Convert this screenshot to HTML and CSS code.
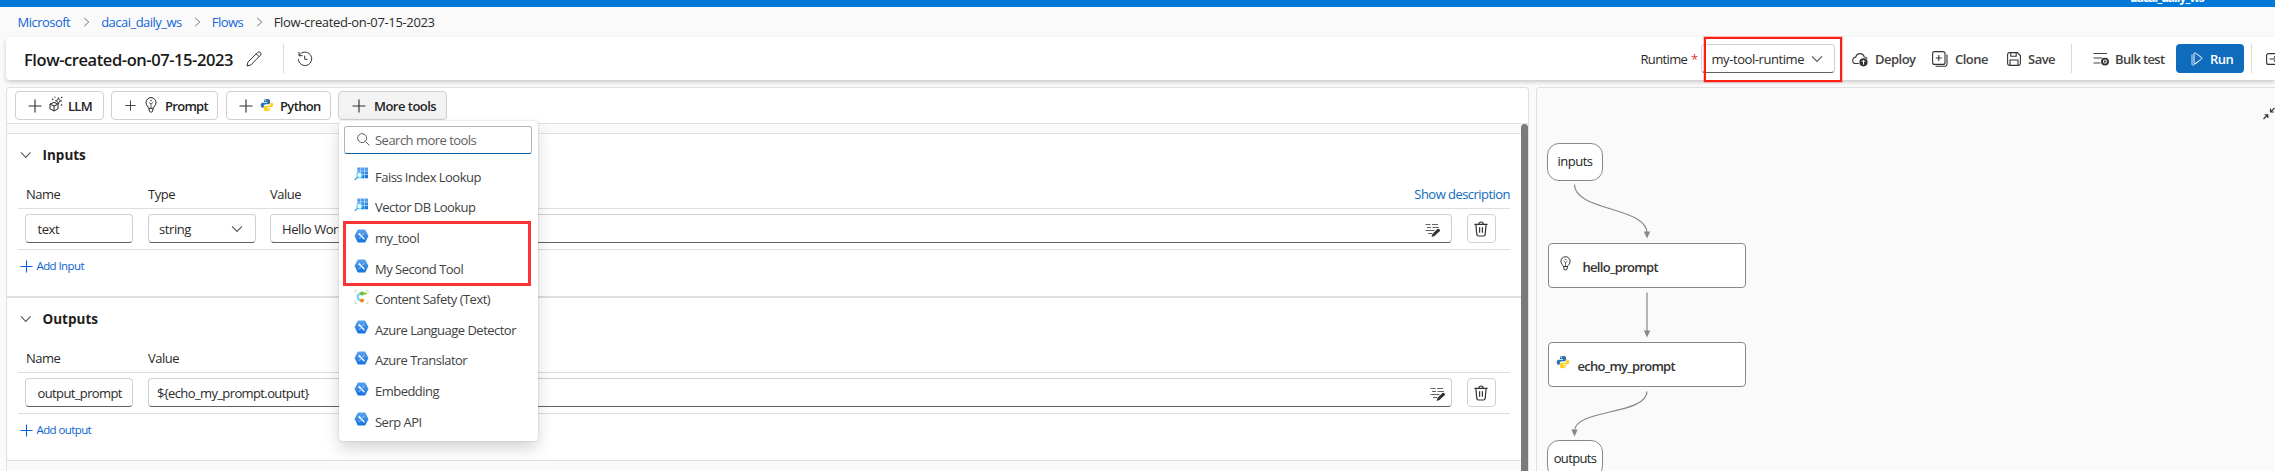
FILE: index.html
```
<!DOCTYPE html>
<html lang="en">
<head>
<meta charset="utf-8">
<title>Flow-created-on-07-15-2023</title>
<link rel="stylesheet" href="styles.css">
</head>
<body>
<svg class="defs" aria-hidden="true">
  <defs>
    <linearGradient id="hexFill" x1="0" y1="0" x2="0" y2="1"><stop offset="0" stop-color="#5aa2f0"/><stop offset="1" stop-color="#1573dd"/></linearGradient>
    <linearGradient id="gridFill" x1="0" y1="0" x2="0" y2="1"><stop offset="0" stop-color="#5ea0ef"/><stop offset="1" stop-color="#0f74d6"/></linearGradient>
  </defs>
  <symbol id="chev" viewBox="0 0 12 8"><path d="M1 1.300 6 6.500 11 1.300" fill="none" stroke="currentColor" stroke-width="1.100"/></symbol>
  <symbol id="crumb" viewBox="0 0 7 11"><path d="M1 1 6 5.500 1 10" fill="none" stroke="currentColor"/></symbol>
  <symbol id="plus" viewBox="0 0 14 14"><path d="M7 .5v13M.5 7h13" fill="none" stroke="currentColor" stroke-width="1.150"/></symbol>
  <symbol id="bulb" viewBox="0 0 12 16"><g fill="none" stroke="currentColor"><path d="M3.700 11.300C3.500 9.700 1 8.600 1 5.600a5 5 0 0 1 10 0c0 3-2.500 4.100-2.700 5.700ZM3.900 11.500l.5 2.700c.1.500.5.800 1 .8h1.200c.5 0 .9-.3 1-.8l.5-2.700"/><path d="M6 11V6.800M3.800 5.200 6 7l2.200-1.800M5 3.600h2" stroke-width=".7"/></g></symbol>
  <symbol id="python" viewBox="0 0 16 16"><path d="M7.900 1C5.500 1 4.600 1.800 4.600 3v1.700h3.600v.6H3C1.700 5.300.8 6.400.8 8.200s.9 2.800 2 2.800h1.500V9.300c0-1.200 1-2.200 2.200-2.200h3.300c1 0 1.700-.8 1.700-1.800V3c0-1.300-1.200-2-3.600-2Z" fill="#2f6fae"/><path d="M8.100 15c2.400 0 3.300-.8 3.300-2v-1.700H7.800v-.6H13c1.300 0 2.200-1.100 2.200-2.900S14.300 5 13.200 5h-1.100v1.700c0 1.200-1 2.200-2.200 2.200H6.200c-1 0-1.700.8-1.700 1.800V13c0 1.300 1.200 2 3.600 2Z" fill="#ffd21f"/><circle cx="6.300" cy="2.900" r=".7" fill="#fff"/><circle cx="9.700" cy="13.100" r=".7" fill="#fff"/></symbol>
  <symbol id="llm" viewBox="0 0 14 16"><g fill="none" stroke="currentColor"><path d="M5 6.400 9 8v4.800L5 15 1 12.800V8ZM1.200 8.200 5 9.900l3.800-1.700M5 9.900V15"/><path d="M9.500 1.600 10.300 4l2.300.8-2.300.8-.8 2.300-.8-2.300-2.300-.8L8.700 4Z" stroke-width=".8"/></g><g fill="currentColor"><circle cx="3.700" cy="3.200" r=".8"/><circle cx="12.700" cy="1.500" r=".8"/><circle cx="12.500" cy="9" r=".8"/><circle cx="6" cy="1.200" r=".6"/></g></symbol>
  <symbol id="hex" viewBox="0 0 14 14"><path d="M3.900.6h6.200q.5 0 .8.5l2.800 5.300q.3.600 0 1.200l-2.800 5.300q-.3.500-.8.500H3.900q-.5 0-.8-.5L.3 7.600Q0 7 .3 6.400l2.800-5.300Q3.400.6 3.900.6Z" fill="url(#hexFill)"/><path d="m5.200 5.400 4.300 4.400" stroke="#fff" stroke-width="1.300" stroke-linecap="round"/><path d="M3.700 4.500c0 1.500 1.200 2.300 2.300 1.800.5-1-.2-2.400-1.700-2.500l.8 1.100Z" fill="#fff"/><path d="M9.700 4.100 7.700 6.300M6.300 7.900 4.600 9.700" stroke="#cfe4fb" stroke-width=".9"/></symbol>
  <symbol id="index" viewBox="0 0 15 15"><path d="M3 .5h3.500V4H3Zm4 0h3.500V4H7Zm4 0h3.500V4H11Zm-8 4h3.500V8H3Zm4 0h3.500V8H7Zm4 0h3.500V8H11Zm-4 4h3.500V12H7Zm4 0h3.500V12H11Z" fill="url(#gridFill)"/><circle cx="5.300" cy="8.800" r="2.800" fill="#e6faff" stroke="#5fd2f5" stroke-width="1.100"/><path d="M3.200 10.900.7 13.500" stroke="#4aa9e6" stroke-width="1.500" stroke-linecap="round"/></symbol>
  <symbol id="safety" viewBox="0 0 16 16"><g fill="none"><path d="M.6 3.500V.6h2.500M12.900.6h2.500v2.900M15.400 12.500v2.900h-2.500M3.100 15.400H.6v-2.900" stroke="#b5dfa0" stroke-width=".9"/><path d="M7.600 3.800C2.400 4.600 2.400 11 7.600 12" stroke="#6fd6f5" stroke-width="2.600"/><path d="M7 4h7" stroke="#72c12c" stroke-width="2"/></g><circle cx="8.600" cy="4" r="2.300" fill="#72c12c"/><circle cx="8.600" cy="11.900" r="2.300" fill="#f5811f"/></symbol>
  <symbol id="trash" viewBox="0 0 14 16"><path d="M.4 3.400h13.200M4.800 3.200a2.200 2.200 0 0 1 4.400 0M1.900 3.600l.9 9.800c.1.900.8 1.600 1.700 1.600h5c.9 0 1.600-.7 1.700-1.600l.9-9.800M5.600 6.300v5.400M8.400 6.300v5.400" fill="none" stroke="currentColor" stroke-width="1.200"/></symbol>
  <symbol id="edit" viewBox="0 0 16 14"><path d="M.5 1.500h5M7 1.500h6M2 4.500h4M7.500 4.500H14M.5 7.500h9M3 10.500h4" stroke="#666" fill="none"/><path d="m7.400 11 5-5q1-.8 2.100.2t.1 2l-5.100 4.900-3 .9Z" fill="#333"/></symbol>
</svg>

<div class="topbar"><span class="topbar-ws">dacai_daily_ws</span></div>

<nav class="crumbs">
  <a>Microsoft</a><svg class="sep sep-1"><use href="#crumb"/></svg>
  <a>dacai_daily_ws</a><svg class="sep sep-2"><use href="#crumb"/></svg>
  <a>Flows</a><svg class="sep sep-3"><use href="#crumb"/></svg>
  <span class="here">Flow-created-on-07-15-2023</span>
</nav>

<header class="head">
  <h1>Flow-created-on-07-15-2023</h1>
  <svg class="pencil" viewBox="0 0 16 16"><path d="m1 15 .9-3.900L11.600 1.500a1.900 1.900 0 0 1 2.800 0 1.900 1.900 0 0 1 0 2.800L4.800 14ZM10.300 2.900l2.800 2.800" fill="none" stroke="#333"/></svg>
  <i class="rule rule-a"></i>
  <svg class="history" viewBox="0 0 16 16"><g fill="none" stroke="#333"><path d="M2.300 4.300A6.700 6.700 0 1 1 1.300 8M2 1v3.700h3.700"/><path d="M7.700 4.700v3.600h2.800"/></g></svg>
  <div class="actions">
    <span class="rt-label">Runtime</span><span class="star">*</span>
    <div class="rt-select"><span>my-tool-runtime</span><svg class="chev"><use href="#chev"/></svg><i class="mark mark-rt"></i></div>
    <div class="act deploy"><svg viewBox="0 0 16 16"><path d="M6.800 12.500H4A3.200 3.200 0 0 1 3.800 6.100 4.300 4.300 0 0 1 12.200 6c1.300 0 2.500.7 3 1.800" fill="none" stroke="#333" stroke-width="1.100"/><circle cx="11.500" cy="11.300" r="4.100" fill="#333"/><path d="M11.500 13.600V9.300M9.800 10.900l1.700-1.700 1.700 1.700" fill="none" stroke="#fff"/></svg><span>Deploy</span></div>
    <div class="act clone"><svg viewBox="0 0 16 16"><g fill="none" stroke="#333" stroke-width="1.100"><rect x=".6" y=".6" width="12.400" height="12.800" rx="2"/><path d="M15 3.500v9.300a2.500 2.500 0 0 1-2.500 2.500H3.500M6.800 4v6M3.800 7h6"/></g></svg><span>Clone</span></div>
    <div class="act save"><svg viewBox="0 0 14 14"><path d="M2.500.6h7.800l3.100 3v7.900a1.900 1.900 0 0 1-1.900 1.900h-9A1.900 1.900 0 0 1 .6 11.500v-9A1.900 1.900 0 0 1 2.500.6ZM3.800.8v3.500h5.400V.8M3 13.200V8h8v5.200" fill="none" stroke="#333" stroke-width="1.100"/></svg><span>Save</span></div>
    <i class="rule rule-b"></i>
    <div class="act bulk"><svg viewBox="0 0 16 14"><path d="M.5 1.500h13.500M.5 6h9M.5 11h7" stroke="#444" stroke-width="1.100"/><circle cx="12" cy="9.600" r="3" fill="#fff" stroke="#333" stroke-width="1.900"/><path d="m11.200 8 2.300 1.600-2.300 1.600Z" fill="#333"/></svg><span>Bulk test</span></div>
    <div class="run"><svg viewBox="0 0 12 14"><g fill="none" stroke="#fff"><path d="M3 1.600v9.300c0 .7.700 1.100 1.200.7l6.500-4.700a.8.800 0 0 0 0-1.300L4.200.9C3.700.5 3 .9 3 1.600Z"/><path d="M1 2.500v9.800c0 .7.700 1.100 1.200.7L7 10" stroke-width=".8"/></g></svg><span>Run</span></div>
    <i class="rule rule-c"></i>
    <svg class="more" viewBox="0 0 18 14"><g fill="none" stroke="#333" stroke-width="1.100"><rect x=".6" y="1.600" width="14" height="10.800" rx="2"/><path d="M3.500 7h7M8 4.500 10.500 7 8 9.500"/></g></svg>
  </div>
</header>

<main class="work">
  <section class="editor">
    <div class="tools">
      <div class="tool t-llm"><svg class="plus"><use href="#plus"/></svg><svg class="glyph"><use href="#llm"/></svg><span>LLM</span></div>
      <div class="tool t-prompt"><svg class="plus small"><use href="#plus"/></svg><svg class="glyph"><use href="#bulb"/></svg><span>Prompt</span></div>
      <div class="tool t-python"><svg class="plus"><use href="#plus"/></svg><svg class="glyph"><use href="#python"/></svg><span>Python</span></div>
      <div class="tool t-more"><svg class="plus"><use href="#plus"/></svg><span>More tools</span>
        <div class="menu">
          <div class="search"><svg viewBox="0 0 14 14"><g fill="none" stroke="#555"><circle cx="5.500" cy="5.500" r="4.800"/><path d="m9 9 4.300 4.300"/></g></svg><span>Search more tools</span></div>
          <ul>
            <li><svg><use href="#index"/></svg>Faiss Index Lookup</li>
            <li><svg><use href="#index"/></svg>Vector DB Lookup</li>
            <li><svg><use href="#hex"/></svg>my_tool</li>
            <li><svg><use href="#hex"/></svg>My Second Tool</li>
            <li><svg><use href="#safety"/></svg>Content Safety (Text)</li>
            <li><svg><use href="#hex"/></svg>Azure Language Detector</li>
            <li><svg><use href="#hex"/></svg>Azure Translator</li>
            <li><svg><use href="#hex"/></svg>Embedding</li>
            <li><svg><use href="#hex"/></svg>Serp API</li>
          </ul>
          <i class="mark mark-menu"></i>
        </div>
      </div>
    </div>
    <div class="body">
      <div class="scroll">
        <div class="group">
          <h2><svg class="chev"><use href="#chev"/></svg>Inputs</h2>
          <div class="cols"><span class="c1">Name</span><span class="c2">Type</span><span class="c3">Value</span><a>Show description</a></div>
          <div class="row">
            <div class="field c1"><span>text</span></div>
            <div class="field c2 select"><span>string</span><svg class="chev"><use href="#chev"/></svg></div>
            <div class="field c3"><span>Hello World</span><svg class="edit"><use href="#edit"/></svg></div>
            <div class="del"><svg><use href="#trash"/></svg></div>
          </div>
          <a class="add"><svg><use href="#plus"/></svg>Add Input</a>
        </div>
        <div class="group last">
          <h2><svg class="chev"><use href="#chev"/></svg>Outputs</h2>
          <div class="cols"><span class="c1">Name</span><span class="c2">Value</span></div>
          <div class="row out">
            <div class="field c1"><span class="tight">output_prompt</span></div>
            <div class="field c3"><span class="tight">${echo_my_prompt.output}</span><svg class="edit"><use href="#edit"/></svg></div>
            <div class="del"><svg><use href="#trash"/></svg></div>
          </div>
          <a class="add"><svg><use href="#plus"/></svg>Add output</a>
        </div>
      </div>
      <i class="thumb"></i>
    </div>
  </section>

  <section class="graph">
    <svg class="edges" viewBox="0 0 738 383">
      <g fill="none" stroke="#8a8886" stroke-width="1.200"><path d="M37.500 96.500C37.500 123 110 119 110 145"/><path d="M110 204.500v40"/><path d="M110 303.500C110 327 37.500 321 37.500 343"/></g>
      <path d="M106.800 143.500h6.400l-3.200 7ZM106.800 242.500h6.400l-3.200 7ZM34.300 341.500h6.400l-3.200 7Z" fill="#8a8886"/>
    </svg>
    <div class="pill n-in">inputs</div>
    <div class="node n-hello"><svg><use href="#bulb"/></svg><span>hello_prompt</span></div>
    <div class="node n-echo"><svg><use href="#python"/></svg><span>echo_my_prompt</span></div>
    <div class="pill n-out">outputs</div>
    <svg class="collapse" viewBox="0 0 12 13"><g fill="none" stroke="#333" stroke-width="1.100"><path d="M.5 12 4.500 8M1.500 7.700h3.300V11M11.500 1 7.700 4.800M7.500 1.500V5h3.500"/></g></svg>
  </section>
</main>
</body>
</html>
```
FILE: styles.css
```
* { box-sizing: border-box; }
body {
  margin: 0; width: 2275px; height: 471px; overflow: hidden;
  background: #fafafa; color: #2b2a29;
  font: 13px/16px "Open Sans", "Noto Sans", sans-serif;
  letter-spacing: -.52px; white-space: nowrap;
}
svg { display: block; flex: none; overflow: visible; }
.defs { position: absolute; width: 0; height: 0; }
h1, h2, ul { margin: 0; padding: 0; list-style: none; }
i { display: block; flex: none; }

.topbar { height: 7px; background: #0078d7; display: flex; }
.topbar-ws { margin: -9.500px 0 0 2130px; height: 14px; color: #fff; font-size: 12px; line-height: 14px; font-weight: 700; letter-spacing: -.95px; }

.crumbs { height: 30px; display: flex; align-items: center; padding: 0 0 1px 17.500px; }
.crumbs a { color: #1266d8; }
.sep { width: 7px; height: 10px; color: #666; }
.sep-1 { margin: 0 11.500px 0 12.500px; }
.sep-2 { margin: 0 11px 0 12px; }
.sep-3 { margin: 0 11px 0 12.500px; }
.here { letter-spacing: -.35px; }

.head {
  position: relative; margin-left: 6px; height: 43px; padding-left: 18px;
  display: flex; align-items: center; background: #fff;
  border-radius: 4px 0 0 4px; box-shadow: 0 2px 4px rgba(0, 0, 0, .2);
}
h1 { width: 222px; font-size: 16.500px; line-height: 22px; font-weight: 600; letter-spacing: -.43px; color: #1b1a19; padding-top: 2px; }
.pencil { width: 16px; height: 16px; }
.rule { width: 1px; height: 29px; background: #dadada; }
.rule-a { margin: 0 13px 0 21px; }
.history { width: 16px; height: 16px; }
.actions { margin-left: auto; width: 634.500px; display: flex; align-items: center; }
.actions > * { flex: none; }
.rt-label { width: 50.500px; letter-spacing: -.65px; }
.star { width: 9.500px; color: #d13438; }
.rt-select {
  position: relative; width: 134.500px; height: 29px; padding: 0 11px 0 10px;
  display: flex; align-items: center; justify-content: space-between;
  border: 1px solid #d1d1d1; border-bottom-color: #616161; border-radius: 4px;
  letter-spacing: -.43px;
}
.chev { width: 12px; height: 8px; color: #555; }
.mark { position: absolute; border: 2.500px solid #fb3535; }
.mark-rt { left: 2px; top: -8px; width: 138px; height: 45px; border: 2px solid #fb1f14; box-shadow: 0 0 0 .5px rgba(251, 31, 20, .5); }
.act { display: flex; align-items: center; font-weight: 600; color: #424242; }
.act svg { width: 16px; height: 16px; }
.deploy { margin-left: 17px; width: 80px; gap: 7px; }
.clone { width: 75px; gap: 7px; }
.save { width: 64px; gap: 7px; }
.save svg { width: 14px; height: 14px; }
.bulk { margin-left: 21px; width: 82.500px; gap: 6px; letter-spacing: -.65px; }
.bulk svg { height: 14px; }
.run {
  width: 68px; height: 29px; padding-left: 15px; display: flex; align-items: center; gap: 7.500px;
  background: #0f6cbd; color: #fff; border-radius: 4px; font-weight: 600;
}
.run svg { width: 12px; height: 14px; }
.rule-c { margin: 0 14px 0 7px; }
.more { width: 18px; height: 14px; }

.work { display: flex; gap: 7px; margin: 7px 0 0 6px; height: 384px; }
.editor { width: 1523px; flex: none; border: 1px solid #e0e0e0; border-bottom: 0; border-radius: 4px 4px 0 0; display: flex; flex-direction: column; }
.tools { height: 36px; flex: none; padding: 3px 0 0 8px; display: flex; background: #fff; border-bottom: 1px solid #e0e0e0; border-radius: 4px 4px 0 0; }
.tool {
  height: 29px; display: flex; align-items: center; font-weight: 600; color: #242424;
  border: 1px solid #d1d1d1; border-radius: 4px; background: #fff;
}
.plus { width: 14px; height: 14px; color: #333; }
.plus.small { width: 11px; height: 11px; }
.t-llm { width: 89px; padding-left: 12px; margin-right: 7px; letter-spacing: -.7px; }
.t-llm .glyph { width: 14px; height: 16px; margin: 0 5px 3px 7px; }
.t-prompt { width: 107px; padding-left: 13px; margin-right: 8px; letter-spacing: -.72px; }
.t-prompt .glyph { width: 12px; height: 16px; margin: 0 8px 2px 9px; }
.t-python { width: 105px; padding-left: 12px; margin-right: 7px; letter-spacing: -.65px; }
.t-python .glyph { width: 14px; height: 14px; margin: 0 6px 2px 7px; }
.t-more { position: relative; width: 109px; padding-left: 13px; background: #f3f3f3; }
.t-more > span { margin-left: 8px; }

.menu {
  position: absolute; left: 0; top: 29px; z-index: 2; width: 198.500px; height: 319.500px; padding: 5px 5px 5px 4.500px;
  background: #fff; border-radius: 4px; font-weight: 400; color: #424242;
  box-shadow: 0 0 2px rgba(0, 0, 0, .2), 0 8px 16px rgba(0, 0, 0, .16);
}
.search {
  width: 188.500px; height: 27.500px; padding-left: 12px; display: flex; align-items: center; gap: 5.500px;
  border: 1px solid #b5b5b5; border-bottom: 1.500px solid #0f5ea8; border-radius: 3px; color: #616161;
}
.search svg { width: 13px; height: 13px; }
.menu ul { padding-top: 8px; }
.menu li { height: 30.620px; padding: 0 0 0 10px; display: flex; align-items: center; gap: 6.500px; }
.menu li svg { width: 15px; height: 14px; margin-bottom: 5px; }
.mark-menu { left: 3.500px; top: 100px; width: 188.500px; height: 65px; border-width: 3px; }

.body { display: flex; flex: 1; min-height: 0; background: #fafafa; }
.scroll { width: 1514px; flex: none; padding-top: 9px; }
.thumb { width: 7px; background: #7a7a7a; border-radius: 4px 4px 0 0; }
.group { height: 165px; padding: 13px 11px 0 11px; background: #fff; border-top: 1px solid #e0e0e0; border-bottom: 2px solid #dedede; }
.group.last { height: 163px; border-top: 0; border-bottom: 1px solid #e0e0e0; }
h2 { height: 16px; display: flex; align-items: center; gap: 11px; padding-left: 2px; font-size: 13.500px; line-height: 16px; font-weight: 700; letter-spacing: 0; color: #1f1e1d; }
h2 .chev { width: 11.500px; }
.cols { margin-top: 17px; height: 29px; padding-left: 8px; display: flex; align-items: center; border-bottom: 1px solid #dedede; letter-spacing: -.48px; }
.cols .c1, .cols .c2 { width: 122px; }
.cols a { margin-left: auto; color: #0f6cbd; letter-spacing: -.54px; }
.row { height: 41px; padding: 5px 0 0 7px; display: flex; border-bottom: 1px solid #dedede; }
.row > * { flex: none; }
.field {
  height: 29px; padding: 0 12px 0 11.500px; display: flex; align-items: center; justify-content: space-between;
  border: 1px solid #d1d1d1; border-bottom-color: #616161; border-radius: 4px; letter-spacing: -.42px;
}
.row .c1, .row .c2 { width: 108px; margin-right: 14.500px; }
.row .c2 { margin-right: 14px; padding-left: 10.500px; }
.row .c3 { width: 1182px; padding-right: 10px; }
.out .c3 { width: 1304px; padding: 0 5px 0 8.500px; }
.tight { letter-spacing: -.62px; }
.edit { width: 16px; height: 14px; margin-top: 2px; }
.del { margin-left: 15px; width: 29px; height: 29px; border: 1px solid #d1d1d1; border-radius: 4px; display: flex; align-items: center; justify-content: center; color: #333; }
.del svg { width: 14px; height: 16px; }
.add { margin: 6px 0 0 2px; height: 20px; display: flex; align-items: center; gap: 3.500px; font-size: 11.500px; letter-spacing: -.6px; color: #0c5fd0; }
.add svg { width: 13px; height: 13px; }

.graph { position: relative; flex: 1; border: solid #e0e0e0; border-width: 1px 0 0 1px; border-radius: 4px 0 0 0; overflow: hidden; }
.edges { position: absolute; left: 0; top: 0; width: 738px; height: 383px; }
.pill, .node { position: absolute; display: flex; align-items: center; background: #fff; border: 1px solid #8a8886; color: #201f1e; }
.pill { left: 10px; width: 56px; height: 38px; justify-content: center; border-radius: 12px; padding-bottom: 3px; }
.n-in { top: 55px; }
.n-out { top: 352px; letter-spacing: -.65px; }
.node { left: 11px; width: 198px; height: 45px; border-radius: 4px; font-weight: 600; color: #333; }
.n-hello { top: 155px; padding-left: 11px; letter-spacing: -.7px; }
.n-hello svg { width: 11px; height: 15px; margin: 0 11.500px 5px 0; color: #201f1e; }
.n-echo { top: 254px; padding-left: 7px; letter-spacing: -.75px; }
.n-echo svg { width: 14px; height: 14px; margin: 0 7.500px 5px 0; }
.node span { padding-top: 2px; }
.collapse { position: absolute; right: 0; top: 19px; width: 12px; height: 13px; }
```
